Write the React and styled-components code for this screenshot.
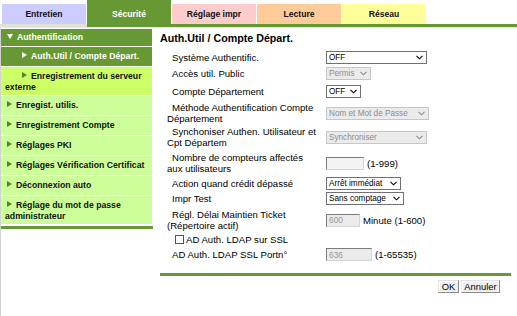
import React from 'react'
import styled, { createGlobalStyle } from 'styled-components'

const GREEN = '#669933'

const GlobalStyle = createGlobalStyle`
  html, body {
    margin: 0;
    padding: 0;
    background: #fff;
  }
  body {
    font-family: "Liberation Sans", Arial, sans-serif;
    color: #000;
  }
`

const Page = styled.div`
  width: 517px;
  height: 316px;
  display: flex;
  flex-direction: column;
  overflow: hidden;
`

const TabRow = styled.div`
  display: flex;
  align-items: flex-end;
  gap: 1px;
  height: 24px;
  padding-left: 2px;
`

const Tab = styled.div`
  box-sizing: border-box;
  width: 84px;
  height: ${p => (p.$active ? 24 : 20)}px;
  padding-top: ${p => (p.$active ? 4 : 0)}px;
  background: ${p => p.$bg};
  color: ${p => (p.$active ? '#fff' : '#111')};
  font-size: 8.6px;
  font-weight: bold;
  display: flex;
  align-items: center;
  justify-content: center;
`

const TabRule = styled.div`
  height: 3px;
  background: linear-gradient(to right, #dfe3d6 87px, ${GREEN} 87px);
  border-bottom: 1px solid #e6eadf;
`

const Body = styled.div`
  flex: 1;
  display: flex;
`

const Sidebar = styled.div`
  width: 151px;
  flex-shrink: 0;
  border-left: 1px solid #d2d2d2;
  padding-top: 1px;
`

const Nav = styled.div`
  display: flex;
  flex-direction: column;
  gap: 1px;
`

const toneBg = {
  head: GREEN,
  current: GREEN,
  hover: '#ccff66',
  plain: '#ccff99',
}

const NavItem = styled.div`
  box-sizing: border-box;
  min-height: ${p => (p.$tone === 'head' ? 17 : 19)}px;
  padding: ${p => (p.$tone === 'head' ? '3px' : '4px')} 4px 3px 4px;
  text-indent: ${p => (p.$level ? 17 : 2)}px;
  background: ${p => toneBg[p.$tone]};
  color: ${p => (p.$tone === 'head' || p.$tone === 'current' ? '#fff' : '#111')};
  font-size: 8.7px;
  font-weight: bold;
  line-height: 10.5px;
`

const Arrow = styled.span`
  display: inline-block;
  width: 0;
  height: 0;
  margin-right: 4px;
  vertical-align: 1px;
  border-left: 5px solid ${p => p.$color};
  border-top: 3px solid transparent;
  border-bottom: 3px solid transparent;
`

const ArrowDown = styled.span`
  display: inline-block;
  width: 0;
  height: 0;
  margin-right: 4px;
  vertical-align: 1px;
  border-top: 5px solid #fff;
  border-left: 3px solid transparent;
  border-right: 3px solid transparent;
`

const SideRule = styled.div`
  height: 3px;
  width: 152px;
  margin-top: 2px;
  background: ${GREEN};
`

const Main = styled.div`
  flex: 1;
  padding: 4px 6px 0 8px;
  display: flex;
  flex-direction: column;
`

const Title = styled.h1`
  margin: 0;
  font-size: 10.7px;
  line-height: 12px;
  font-weight: bold;
`

const Form = styled.div`
  margin-top: 7px;
  padding-left: 7px;
  display: flex;
  flex-direction: column;
`

const Row = styled.div`
  display: flex;
  align-items: center;
  margin-top: ${p => p.$mt || 0}px;
`

const Label = styled.div`
  width: 159px;
  flex-shrink: 0;
  font-size: 9.6px;
  line-height: 11px;
  text-indent: 5px;
`

const Controls = styled.div`
  display: flex;
  align-items: center;
  gap: 3px;
  font-size: 9.6px;
`

const SelectBox = styled.div`
  box-sizing: border-box;
  width: ${p => p.$w}px;
  height: 13px;
  display: flex;
  align-items: center;
  justify-content: space-between;
  gap: 2px;
  padding: 0 3px 0 2px;
  border: 1px solid ${p => (p.$disabled ? '#c6c6c6' : '#707070')};
  background: ${p => (p.$disabled ? '#ebebeb' : '#fff')};
  color: ${p => (p.$disabled ? '#8c8c8c' : '#000')};
  font-size: 8.2px;
  white-space: nowrap;
  overflow: hidden;
`

const TextBox = styled.div`
  box-sizing: border-box;
  width: ${p => p.$w}px;
  height: 13px;
  display: flex;
  align-items: center;
  padding-left: 2px;
  border: 1px solid;
  border-color: #7c7c7c #d6d6d6 #d6d6d6 #7c7c7c;
  background: ${p => (p.$disabled ? '#ebebeb' : '#f3f3f3')};
  color: #9a9a9a;
  font-size: 8.4px;
`

const CheckRow = styled.div`
  display: flex;
  align-items: center;
  gap: 2px;
  padding-left: 8px;
  font-size: 9.6px;
  line-height: 11px;
`

const CheckBox = styled.span`
  box-sizing: border-box;
  width: 9px;
  height: 9px;
  border: 1px solid #555;
  background: #fff;
`

const Footer = styled.div`
  margin-top: 12px;
  border-top: 3px solid ${GREEN};
  display: flex;
  justify-content: flex-end;
  gap: 2px;
  padding: 4px 11px 0 0;
`

const Button = styled.button`
  box-sizing: border-box;
  height: 13px;
  width: ${p => p.$w}px;
  padding: 0;
  font-family: inherit;
  font-size: 9.4px;
  line-height: 11px;
  color: #000;
  background: #efefef;
  border: 1px solid;
  border-color: #e4e4e4 #8c8c8c #8c8c8c #e4e4e4;
  box-shadow: inset 1px 1px 0 #fff;
`

const Chevron = () => (
  <svg width="7" height="5" viewBox="0 0 7 5" style={{ flexShrink: 0 }}>
    <polyline points="0.5,0.8 3.5,3.8 6.5,0.8" fill="none" stroke="currentColor" strokeWidth="1.1" />
  </svg>
)

const Select = ({ w, disabled, children }) => (
  <SelectBox $w={w} $disabled={disabled}>
    <span>{children}</span>
    <Chevron />
  </SelectBox>
)

const tabs = [
  { label: 'Entretien', bg: '#ccccff' },
  { label: 'Sécurité', bg: GREEN, active: true },
  { label: 'Réglage impr', bg: '#ffcccc' },
  { label: 'Lecture', bg: '#ffcc99' },
  { label: 'Réseau', bg: '#ffff99' },
]

const navItems = [
  { text: 'Auth.Util / Compte Départ.', level: 1, tone: 'current' },
  { text: 'Enregistrement du serveur externe', level: 1, tone: 'hover' },
  { text: 'Enregist. utilis.', tone: 'plain' },
  { text: 'Enregistrement Compte', tone: 'plain' },
  { text: 'Réglages PKI', tone: 'plain' },
  { text: 'Réglages Vérification Certificat', tone: 'plain' },
  { text: 'Déconnexion auto', tone: 'plain' },
  { text: 'Réglage du mot de passe administrateur', tone: 'plain' },
]

export default function App() {
  return (
    <Page>
      <GlobalStyle />
      <TabRow>
        {tabs.map(t => (
          <Tab key={t.label} $bg={t.bg} $active={t.active}>{t.label}</Tab>
        ))}
      </TabRow>
      <TabRule />
      <Body>
        <Sidebar>
          <Nav>
            <NavItem $tone="head">
              <ArrowDown />Authentification
            </NavItem>
            {navItems.map(item => (
              <NavItem key={item.text} $tone={item.tone} $level={item.level}>
                <Arrow $color={item.tone === 'current' ? '#fff' : '#5d7f2e'} />
                {item.text}
              </NavItem>
            ))}
          </Nav>
          <SideRule />
        </Sidebar>
        <Main>
          <Title>Auth.Util / Compte Départ.</Title>
          <Form>
            <Row>
              <Label>Système Authentific.</Label>
              <Controls><Select w={101}>OFF</Select></Controls>
            </Row>
            <Row $mt={3}>
              <Label>Accès util. Public</Label>
              <Controls><Select w={45} disabled>Permis</Select></Controls>
            </Row>
            <Row $mt={5}>
              <Label>Compte Département</Label>
              <Controls><Select w={35}>OFF</Select></Controls>
            </Row>
            <Row $mt={4}>
              <Label>Méthode Authentification Compte<br />Département</Label>
              <Controls><Select w={103} disabled>Nom et Mot de Passe</Select></Controls>
            </Row>
            <Row $mt={2}>
              <Label>Synchoniser Authen. Utilisateur et<br />Cpt Départem</Label>
              <Controls><Select w={101} disabled>Synchroniser</Select></Controls>
            </Row>
            <Row $mt={4}>
              <Label>Nombre de compteurs affectés<br />aux utilisateurs</Label>
              <Controls>
                <TextBox $w={38} />
                <span>(1-999)</span>
              </Controls>
            </Row>
            <Row $mt={3}>
              <Label>Action quand crédit dépassé</Label>
              <Controls><Select w={75}>Arrêt immédiat</Select></Controls>
            </Row>
            <Row $mt={2}>
              <Label>Impr Test</Label>
              <Controls><Select w={78}>Sans comptage</Select></Controls>
            </Row>
            <Row $mt={4}>
              <Label>Régl. Délai Maintien Ticket<br />(Répertoire actif)</Label>
              <Controls>
                <TextBox $w={34} $disabled>600</TextBox>
                <span>Minute (1-600)</span>
              </Controls>
            </Row>
            <Row $mt={3}>
              <CheckRow>
                <CheckBox />
                <span>AD Auth. LDAP sur SSL</span>
              </CheckRow>
            </Row>
            <Row $mt={3}>
              <Label>AD Auth. LDAP SSL Portn°</Label>
              <Controls>
                <TextBox $w={46} $disabled>636</TextBox>
                <span>(1-65535)</span>
              </Controls>
            </Row>
          </Form>
          <Footer>
            <Button $w={21}>OK</Button>
            <Button $w={39}>Annuler</Button>
          </Footer>
        </Main>
      </Body>
    </Page>
  )
}
